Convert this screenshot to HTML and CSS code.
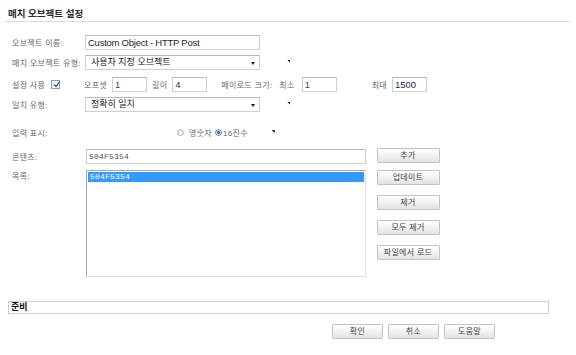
FILE: index.html
```html
<!DOCTYPE html>
<html lang="ko">
<head>
    <meta charset="UTF-8">
    <title>매치 오브젝트 설정</title>
    <link rel="stylesheet" href="styles.css">
</head>
<body>
<div class="dialog">
    <div class="title">매치 오브젝트 설정</div>

    <div class="form">
        <div class="row row-name">
            <span class="lbl">오브젝트 이름:</span>
            <div class="field field-wide field-name">Custom Object - HTTP Post</div>
        </div>

        <div class="row row-type">
            <span class="lbl">매치 오브젝트 유형:</span>
            <div class="select">사용자 지정 오브젝트<span class="caret"></span></div>
            <span class="mark"></span>
        </div>

        <div class="row row-opts">
            <span class="lbl">설정 사용 <span class="check"><svg width="7" height="7" viewBox="0 0 7 7"><path d="M1 3.5 L3 5.5 L6.5 0.8" fill="none" stroke="#3d5f8c" stroke-width="1.3"/></svg></span></span>
            <span class="txt txt-off">오프셋</span>
            <div class="field field-num num-a">1</div>
            <span class="txt txt-len">길이</span>
            <div class="field field-num num-b">4</div>
            <span class="txt txt-size">페이로드 크기:</span>
            <span class="txt txt-min">최소</span>
            <div class="field field-num field-min num-a">1</div>
            <span class="txt txt-max">최대</span>
            <div class="field field-num num-c">1500</div>
        </div>

        <div class="row row-match">
            <span class="lbl">일치 유형:</span>
            <div class="select">정확히 일치<span class="caret"></span></div>
            <span class="mark"></span>
        </div>

        <div class="row row-input">
            <span class="lbl">입력 표시:</span>
            <div class="radios">
                <span class="radio"></span><span class="txt">영숫자</span>
                <span class="radio radio-on"></span><span class="txt">16진수</span>
            </div>
            <span class="mark mark-radio"></span>
        </div>

        <div class="row row-content">
            <span class="lbl">콘텐츠:</span>
            <div class="field field-hex">504F5354</div>
            <div class="side">
                <button class="btn btn-side">추가</button>
            </div>
        </div>

        <div class="row row-list">
            <span class="lbl">목록:</span>
            <div class="listbox">
                <div class="item item-sel">504F5354</div>
            </div>
            <div class="side side-stack">
                <button class="btn btn-side">업데이트</button>
                <button class="btn btn-side">제거</button>
                <button class="btn btn-side">모두 제거</button>
                <button class="btn btn-side">파일에서 로드</button>
            </div>
        </div>
    </div>

    <div class="status">준비</div>

    <div class="actions">
        <button class="btn btn-foot">확인</button>
        <button class="btn btn-foot">취소</button>
        <button class="btn btn-foot">도움말</button>
    </div>
</div>
</body>
</html>
```

FILE: styles.css
```css
* {
    margin: 0;
    padding: 0;
    box-sizing: border-box;
}

body {
    background: #fff;
    color: #666;
    font-family: "Liberation Sans", "Noto Sans CJK KR", sans-serif;
    font-size: 8px;
}

.dialog {
    width: 576px;
    height: 355px;
}

.title {
    margin: 0 6px 0 5px;
    padding: 8px 0 2px 3px;
    line-height: 11px;
    font-size: 9.5px;
    font-weight: bold;
    color: #2b2b2b;
    border-bottom: 1px solid #dcdcdc;
}

.form {
    padding-left: 12px;
    padding-top: 13px;
}

.row {
    display: flex;
    align-items: center;
    height: 15px;
}

.row-type { margin-top: 5px; }
.row-opts { margin-top: 7px; }
.row-match { margin-top: 5px; }
.row-input { margin-top: 13px; }
.row-content { margin-top: 9px; }

.row-list {
    margin-top: 6px;
    height: auto;
    align-items: flex-start;
}

.lbl {
    width: 73px;
    flex: none;
    display: flex;
    align-items: center;
    white-space: nowrap;
    letter-spacing: 0.3px;
}

.txt {
    white-space: nowrap;
    letter-spacing: 0.3px;
}

/* text inputs */
.field {
    height: 15px;
    border: 1px solid #cfcfcf;
    border-top-color: #b9b9b9;
    background: #fff;
    color: #262633;
    font-size: 9.5px;
    letter-spacing: -0.25px;
    line-height: 13px;
    padding-left: 2px;
    white-space: nowrap;
}

.field-wide {
    width: 175px;
}

.field-num {
    width: 35px;
    margin-left: 5px;
    letter-spacing: 0;
}

.field-min { margin-left: 7px; }

.num-a { color: #7a3b00; }
.num-b { color: #2a2a55; }
.num-c { color: #1f2a60; }

.field-hex {
    width: 280px;
    margin-left: 1px;
    font-family: "Liberation Mono", monospace;
    font-size: 8px;
    letter-spacing: 0.2px;
    color: #505050;
}

/* dropdowns */
.select {
    position: relative;
    width: 175px;
    height: 15px;
    border: 1px solid #cfcfcf;
    border-top-color: #b9b9b9;
    background: #fff;
    font-size: 9px;
    line-height: 13px;
    padding-left: 5px;
    color: #222;
    white-space: nowrap;
}

.caret {
    position: absolute;
    right: 4px;
    top: 6px;
    border-left: 2.5px solid transparent;
    border-right: 2.5px solid transparent;
    border-top: 3px solid #222;
}

.mark {
    width: 3px;
    height: 3px;
    margin-left: 27px;
    margin-top: -3px;
    background: #111;
    clip-path: polygon(0 0, 100% 0, 100% 100%);
}

.mark-radio {
    margin-left: 24px;
    margin-top: -2px;
}

/* offset / length row */
.lbl .check {
    display: inline-block;
    width: 9px;
    height: 9px;
    margin-left: 6px;
    border: 1px solid #8f9fb5;
    background: linear-gradient(#e9eef5, #fdfdfe);
    line-height: 0;
}

.lbl .check svg {
    margin-left: 0.5px;
}

.txt-off { margin-left: -1px; }
.txt-off + .field-num { margin-left: 5px; }
.txt-len { margin-left: 5px; }
.txt-size { margin-left: 14px; }
.txt-min { margin-left: 7px; }
.txt-max { margin-left: 35px; }

/* radios */
.radios {
    display: flex;
    align-items: center;
    margin-left: 92px;
}

.radio {
    width: 7px;
    height: 7px;
    border-radius: 50%;
    border: 1px solid #b5b5b5;
    background: radial-gradient(circle, #f4f4f4 40%, #d9d9d9 100%);
    margin-right: 5px;
}

.radio-on {
    margin-left: 3px;
    margin-right: 1px;
    border-color: #6d7f96;
    background: radial-gradient(circle, #2f6db4 35%, #c7d6e8 45%, #e6ecf3 100%);
}

/* list */
.listbox {
    width: 280px;
    height: 107px;
    margin-left: 1px;
    border: 1px solid #a8a8a8;
    border-right-color: #e0e0e0;
    border-bottom-color: #e0e0e0;
    padding: 1px;
    background: #fff;
}

.item {
    height: 10px;
    line-height: 10px;
    padding-left: 2px;
    font-family: "Liberation Mono", monospace;
    font-size: 8px;
    letter-spacing: 0.2px;
}

.item-sel {
    background: #3399ff;
    color: #fff;
}

/* buttons */
.side {
    width: 72px;
    margin-left: 6px;
    display: flex;
    justify-content: center;
}

.side-stack {
    flex-direction: column;
    align-items: center;
    gap: 10px;
}

.btn {
    height: 15px;
    border: 1px solid #c4c4c4;
    border-radius: 1px;
    background: linear-gradient(#ffffff, #f1f1f1 55%, #e2e2e2);
    color: #444;
    font-family: "Liberation Sans", "Noto Sans CJK KR", sans-serif;
    font-size: 8px;
    letter-spacing: 0.3px;
    line-height: 13px;
    white-space: nowrap;
}

.btn-side {
    min-width: 63px;
    padding: 0 6px;
}

.row-content .btn-side {
    margin-top: -3px;
}

/* footer */
.status {
    margin: 24px 27px 0 8px;
    height: 13px;
    border: 1px solid #d0d0d0;
    padding-left: 2px;
    font-size: 9px;
    line-height: 11px;
    color: #111;
    font-weight: bold;
}

.actions {
    display: flex;
    justify-content: flex-end;
    gap: 5px;
    margin: 10px 81px 0 0;
}

.btn-foot {
    width: 51px;
}
```
